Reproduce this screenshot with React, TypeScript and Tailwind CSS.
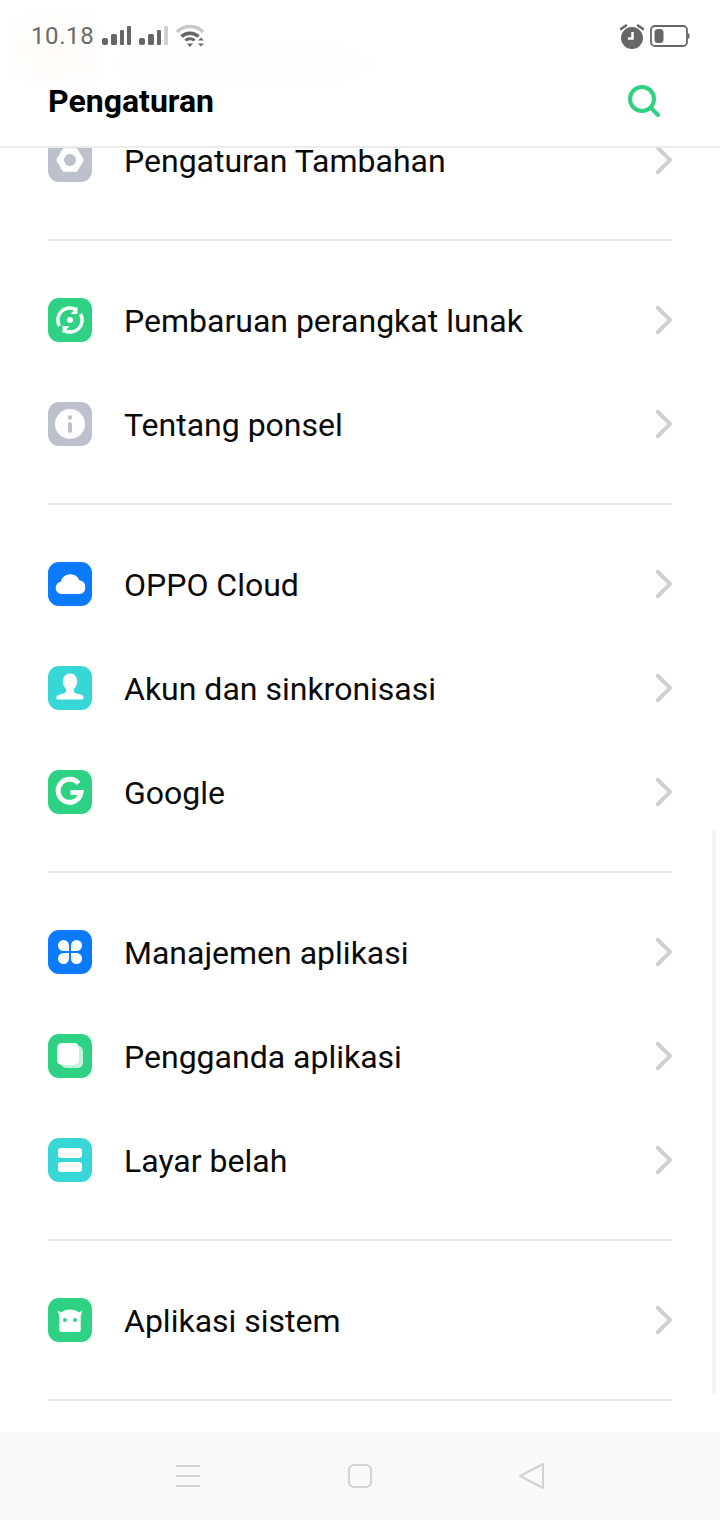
import { ReactNode } from "react";

const GREEN = "bg-[#2fd283]";
const GRAY = "bg-[#bcc1cc]";
const BLUE = "bg-[#0a7aff]";
const TEAL = "bg-[#38d7d7]";

function RowIcon({ color, children }: { color: string; children: ReactNode }) {
  return (
    <div className={`flex h-11 w-11 shrink-0 items-center justify-center rounded-[11px] ${color}`}>
      <svg width="44" height="44" viewBox="0 0 44 44">
        {children}
      </svg>
    </div>
  );
}

function Row({ label, icon }: { label: string; icon: ReactNode }) {
  return (
    <div className="flex h-[104px] items-center">
      {icon}
      <span className="ml-8 flex-1 pt-[2px] text-[32px] leading-[26px] text-[#0a0a0a]">{label}</span>
      <svg width="16" height="28" viewBox="0 0 16 28" fill="none" stroke="#cfcfcf" strokeWidth="4" strokeLinecap="round" strokeLinejoin="round">
        <path d="M2 2l12 12L2 26" />
      </svg>
    </div>
  );
}

function Section({ children }: { children: ReactNode }) {
  return <div className="border-b-2 border-[#e8e8e8] py-[27px]">{children}</div>;
}

const extraIcon = (
  <RowIcon color={GRAY}>
    <path d="M15.500 11h13l6.500 11-6.500 11h-13L9 22z" fill="white" stroke="white" strokeWidth="1.500" strokeLinejoin="round" />
    <circle cx="22" cy="22" r="6" fill="#bcc1cc" />
  </RowIcon>
);

const updateIcon = (
  <RowIcon color={GREEN}>
    <circle cx="22" cy="22" r="3" fill="white" />
    <path d="M11.500 28A12 12 0 0 1 28 11.600" fill="none" stroke="white" strokeWidth="3.500" strokeLinecap="butt" />
    <path d="M32.500 16A12 12 0 0 1 16 32.400" fill="none" stroke="white" strokeWidth="3.500" strokeLinecap="butt" />
    <path d="M29.500 8.500v7.500h-7z" fill="white" />
    <path d="M14.500 35.500V28h7z" fill="white" />
  </RowIcon>
);

const infoIcon = (
  <RowIcon color={GRAY}>
    <circle cx="22" cy="22" r="15" fill="white" />
    <circle cx="22" cy="15.500" r="2.200" fill="#bcc1cc" />
    <rect x="20" y="20" width="4" height="11" rx="2" fill="#bcc1cc" />
  </RowIcon>
);

const cloudIcon = (
  <RowIcon color={BLUE}>
    <path
      d="M14 32a6.200 6.200 0 0 1-1.200-12.300 9.800 9.800 0 0 1 18.600-1.400 7 7 0 0 1 .6 13.700z"
      fill="white"
    />
  </RowIcon>
);

const accountIcon = (
  <RowIcon color={TEAL}>
    <path
      d="M22 7.500c4.400 0 7.200 3.400 7.200 7.800 0 3.200-1.300 5.900-3.200 7.500v2.200c0 1.300 1 2 2.300 2.400l4.200 1.200c2 .6 3 1.800 3.200 3.400.1.900-.5 1.500-1.400 1.500H9.700c-.9 0-1.500-.6-1.400-1.500.2-1.600 1.200-2.800 3.200-3.400l4.200-1.200c1.300-.4 2.300-1.100 2.300-2.400v-2.200c-1.900-1.600-3.200-4.300-3.200-7.500 0-4.400 2.800-7.800 7.200-7.800z"
      fill="white"
    />
  </RowIcon>
);

const googleIcon = (
  <RowIcon color={GREEN}>
    <path d="M30.500 13.500A11.500 11.500 0 1 0 33 22.500H22.500" fill="none" stroke="white" strokeWidth="5" />
  </RowIcon>
);

const appsIcon = (
  <RowIcon color={BLUE}>
    <path d="M21 21h-5.500a5.500 5.500 0 1 1 5.500-5.500z" fill="white" />
    <path d="M23 21h5.500a5.500 5.500 0 1 0-5.500-5.500z" fill="white" />
    <path d="M21 23h-5.500a5.500 5.500 0 1 0 5.500 5.500z" fill="white" />
    <path d="M23 23h5.500a5.500 5.500 0 1 1-5.500 5.500z" fill="white" />
  </RowIcon>
);

const cloneIcon = (
  <RowIcon color={GREEN}>
    <rect x="13" y="12" width="22" height="22" rx="5" fill="white" fillOpacity="0.7" />
    <rect x="9" y="9" width="22" height="22" rx="5" fill="white" />
  </RowIcon>
);

const splitIcon = (
  <RowIcon color={TEAL}>
    <rect x="10" y="10" width="24" height="10" rx="3" fill="white" />
    <rect x="10" y="24" width="24" height="10" rx="3" fill="white" />
  </RowIcon>
);

const systemIcon = (
  <RowIcon color={GREEN}>
    <path
      d="M9.500 12.500l3.500 2c2.300-1.700 5.600-3 9-3s6.700 1.300 9 3l3.500-2-1.800 5.500V32a2 2 0 0 1-2 2H13.300a2 2 0 0 1-2-2V18z"
      fill="white"
    />
    <circle cx="17" cy="22" r="2" fill="#2fd283" />
    <circle cx="27" cy="22" r="2" fill="#2fd283" />
  </RowIcon>
);

function Signal({ last }: { last: string }) {
  return (
    <svg width="30" height="20" viewBox="0 0 30 20" fill="#666">
      <rect x="0" y="12" width="6" height="7" rx="2" />
      <rect x="9" y="8" width="6" height="11" rx="1.500" />
      <rect x="18" y="4" width="4" height="15" rx="1" />
      <rect x="25" y="0" width="4" height="19" rx="1" fill={last} />
    </svg>
  );
}

function StatusBar() {
  return (
    <div className="flex h-[72px] items-start justify-between pl-[31px] pr-[30px] pt-[23px]">
      <div className="flex items-center">
        <span className="w-[71px] text-[24px] leading-[26px] tracking-[0.6px] text-[#6a6a6a]">10.18</span>
        <div className="flex items-center gap-[7px]">
          <Signal last="#666" />
          <Signal last="#d0d0d0" />
        </div>
        <svg width="30" height="24" viewBox="0 0 30 24" className="ml-[7px]" fill="none">
          <path d="M1 8C8 .5 20 .5 27 8" stroke="#c8c8c8" strokeWidth="3.500" />
          <path d="M5.500 12.500c4.500-4.500 12.500-4.500 17 0" stroke="#666" strokeWidth="3.500" />
          <path d="M9.500 16.500c2.500-2.500 6.500-2.500 9 0" stroke="#666" strokeWidth="3" />
          <path d="M11 19.500h6l-3 3.500z" fill="#666" />
          <path d="M25 13.500l3 3h-6zM25 22.500l3-3h-6z" fill="#666" />
        </svg>
      </div>
      <div className="flex items-center">
        <svg width="26" height="26" viewBox="0 0 26 26">
          <circle cx="13" cy="15" r="11" fill="#666" />
          <path d="M2 6l5-3.500M24 6l-5-3.500" stroke="#666" strokeWidth="2.500" strokeLinecap="round" />
          <path d="M13.500 9v6.500H9" fill="none" stroke="white" strokeWidth="2.500" />
        </svg>
        <svg width="40" height="22" viewBox="0 0 40 22" className="ml-[5px]">
          <rect x="1" y="1" width="36" height="20" rx="4" fill="none" stroke="#666" strokeWidth="1.800" />
          <rect x="4.500" y="4" width="9" height="14" rx="3.500" fill="#666" />
          <rect x="37.500" y="8.500" width="2" height="5" rx="1" fill="#666" />
        </svg>
      </div>
    </div>
  );
}

export default function App() {
  return (
    <div className="relative flex h-screen w-full flex-col overflow-hidden bg-white font-['Roboto',sans-serif]">
      <header className="relative z-10 h-[148px] shrink-0 border-b-2 border-[#ececec] bg-white">
        <div className="absolute left-5 top-4 h-[66px] w-[76px] bg-[#fffcf8] blur-md" />
        <div className="absolute left-[120px] top-[48px] h-[32px] w-[244px] bg-[#fdfdfd] blur-md" />
        <div className="relative">
          <StatusBar />
          <div className="flex items-center justify-between pl-12 pr-[60px] pt-[9px]">
            <h1 className="text-[32px] font-bold leading-10 text-black">Pengaturan</h1>
            <svg width="32" height="32" viewBox="0 0 32 32" fill="none" stroke="#2fd283" strokeWidth="4" strokeLinecap="round">
              <circle cx="14" cy="14" r="12" />
              <path d="M23 23l7 7" />
            </svg>
          </div>
        </div>
      </header>

      <main className="min-h-0 flex-1 overflow-hidden px-12">
        <div className="mt-[-67px]">
          <Section>
            <Row label="Pengaturan Tambahan" icon={extraIcon} />
          </Section>
          <Section>
            <Row label="Pembaruan perangkat lunak" icon={updateIcon} />
            <Row label="Tentang ponsel" icon={infoIcon} />
          </Section>
          <Section>
            <Row label="OPPO Cloud" icon={cloudIcon} />
            <Row label="Akun dan sinkronisasi" icon={accountIcon} />
            <Row label="Google" icon={googleIcon} />
          </Section>
          <Section>
            <Row label="Manajemen aplikasi" icon={appsIcon} />
            <Row label="Pengganda aplikasi" icon={cloneIcon} />
            <Row label="Layar belah" icon={splitIcon} />
          </Section>
          <Section>
            <Row label="Aplikasi sistem" icon={systemIcon} />
          </Section>
        </div>
      </main>

      {/* scrollbar sits over the list */}
      <div className="absolute right-1 top-[829px] h-[566px] w-1 rounded-full bg-[#f5f5f5]" />

      <nav className="flex h-[88px] shrink-0 items-center bg-[#f9f9f9] pl-[176px] pr-[176px]">
        <div className="flex w-full items-center justify-between">
          <svg width="26" height="24" viewBox="0 0 26 24" stroke="#d2d2d2" strokeWidth="2">
            <path d="M0 2h24M0 12h24M0 22h24" />
          </svg>
          <div className="h-6 w-6 rounded-[6px] border-2 border-[#d2d2d2]" />
          <svg width="26" height="28" viewBox="0 0 26 28" fill="none" stroke="#d2d2d2" strokeWidth="2" strokeLinejoin="round">
            <path d="M25 2v24L2 14z" />
          </svg>
        </div>
      </nav>
    </div>
  );
}
